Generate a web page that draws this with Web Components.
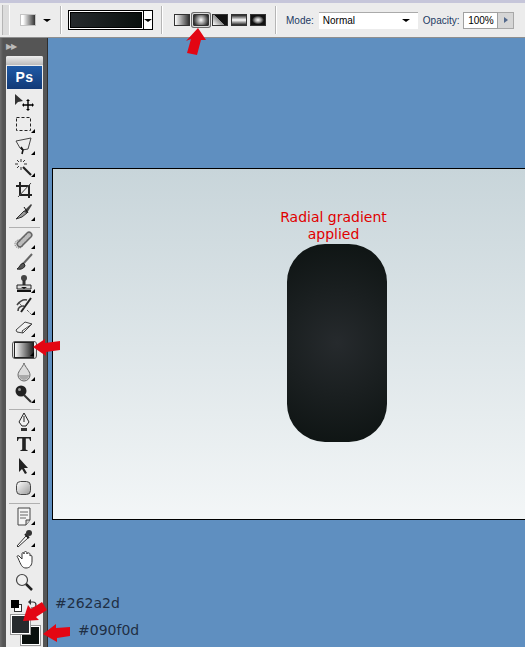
<!DOCTYPE html>
<html>
<head>
<meta charset="utf-8">
<style>
html,body{margin:0;padding:0;width:525px;height:647px;overflow:hidden;background:#5f8fc0;}
body{position:relative;font-family:"Liberation Sans",sans-serif;}
</style>
</head>
<body>
<ps-app>
	<ps-optionbar></ps-optionbar>
	<ps-workspace>
		<ps-toolbox></ps-toolbox>
		<ps-canvas></ps-canvas>
	</ps-workspace>
	<ps-arrow points="198,28 206,40 201,40 197,55 187,53 191,39 186,41"></ps-arrow>
	<ps-arrow points="33,347 45,339 45,343 60,341 60,350 46,352 46,356"></ps-arrow>
	<ps-arrow points="23,621 28,605 31,609 42,602 47,610 36,617 39,620"></ps-arrow>
	<ps-arrow points="43,634 56,624 56,628 70,627 70,636 57,638 57,642"></ps-arrow>
	<ps-note style="left:55px;top:595px">#262a2d</ps-note>
	<ps-note style="left:78px;top:622px">#090f0d</ps-note>
</ps-app>
<script>
(function() {

function define(name, css, html, setup) {
	const template = document.createElement('template');
	template.innerHTML = '<style>' + css + '</style>' + html;
	customElements.define(name, class extends HTMLElement {
		constructor() {
			super();
			this.attachShadow({mode: 'open'}).appendChild(template.content.cloneNode(true));
		}
		connectedCallback() { if (setup) setup(this); }
	});
}

define('ps-app', ':host{display:block;width:525px;height:647px;position:relative;overflow:hidden;}', '<slot></slot>');

define('ps-workspace', ':host{display:flex;height:609px;align-items:flex-start;gap:4px;}', '<slot></slot>');

// gradient type buttons
function gradBtn(bg, on) {
	return '<span class="gb' + (on ? ' on' : '') + '" style="background:' + bg + '"></span>';
}
define('ps-optionbar', `
:host{display:flex;align-items:center;box-sizing:border-box;height:38px;background:#ececec;border-top:3px solid #c6c6da;border-bottom:1px solid #8f8f8f;font-size:10px;color:#1c3a63;position:relative;}
.grip{width:8px;height:30px;margin-left:2px;background:#dcdcdc;border-left:1px solid #b5b5b5;border-right:1px solid #fff;box-sizing:border-box;}
.sw{width:16px;height:12px;margin-left:10px;background:linear-gradient(90deg,#fff 15%,#333);border:1px solid #c4c4c4;box-sizing:border-box;}
.tri{width:0;height:0;border:4px solid transparent;border-top:3px solid #000;border-bottom:0;}
.sep{width:1px;height:28px;background:#b5b5b5;border-right:1px solid #fff;}
.picker{display:flex;box-sizing:border-box;width:85px;height:20px;border:1px solid #000;background:#fff;margin-left:6px;}
.picker b{display:block;width:72px;margin:1px;border:1px solid #000;background:linear-gradient(90deg,#262a2d,#090f0d);}
.picker u{flex:1;display:flex;align-items:center;justify-content:center;border-left:1px solid #000;}
.types{display:flex;gap:3px;margin-left:11px;}
.gb{display:block;box-sizing:border-box;width:16px;height:12px;border:1px solid #333;}
.gb.on{box-shadow:0 0 0 1px #ddd,0 0 0 2px #6a6a6a;border-radius:1px;}
.sel{display:flex;align-items:center;box-sizing:border-box;width:99px;height:17px;background:#fff;margin-left:5px;border-top:1px solid #aaa;padding:0 8px 0 4px;color:#000;justify-content:space-between;}
.inp{box-sizing:border-box;width:35px;height:17px;border:1px solid #a0a0a0;background:#fff;color:#000;text-align:center;line-height:15px;margin-left:4px;}
.spin{box-sizing:border-box;width:16px;height:17px;background:#d6d6d6;border:1px solid #a8a8a8;border-left:0;display:flex;align-items:center;justify-content:center;}
.spin i{width:0;height:0;border:3px solid transparent;border-left:4px solid #53698c;border-right:0;}
.l{white-space:nowrap;}
`, `
<div class="grip"></div>
<div class="sw"></div>
<div class="tri" style="margin-left:7px"></div>
<div class="sep" style="margin-left:9px"></div>
<div class="picker"><b></b><u><div class="tri"></div></u></div>
<div class="sep" style="margin-left:8px"></div>
<div class="types">` +
	gradBtn('linear-gradient(90deg,#fff,#333)') +
	gradBtn('radial-gradient(circle,#fff,#333 85%)', true) +
	gradBtn('linear-gradient(45deg,#fff,#888 50%,#111 50%,#111)') +
	gradBtn('linear-gradient(180deg,#222,#fff 50%,#222)') +
	gradBtn('radial-gradient(ellipse 7px 5px at center,#fff,#999 45%,#111 85%)') + `
</div>
<div class="sep" style="margin-left:9px"></div>
<span class="l" style="margin-left:9px">Mode:</span>
<div class="sel"><span>Normal</span><div class="tri"></div></div>
<span class="l" style="margin-left:5px">Opacity:</span>
<div class="inp">100%</div>
<div class="spin"><i></i></div>
`);

define('ps-tool', `
:host{display:flex;align-items:center;justify-content:center;box-sizing:border-box;width:25px;height:22px;margin:0 auto;position:relative;}
:host([on]){height:18px;margin:2px auto;background:linear-gradient(#f4f4f4,#cfcfcf);border:1px solid #555;border-radius:3px;box-shadow:inset 0 0 1px #fff;}
:host([more])::after{content:"";position:absolute;right:2px;bottom:2px;border:2px solid transparent;border-right-color:#000;border-bottom-color:#000;}
svg{display:block;flex:none;transform:translateX(-1px);}
`, '<svg width="20" height="20" viewBox="0 0 20 20"><slot></slot></svg>', function(el) {
	el.shadowRoot.querySelector('svg').innerHTML = el.dataset.i;
});

const tools = [
	['<path d="M1 2v11l3-3 5-1z" fill="#333"/><path d="M14 9v8M10 13h8" stroke="#000" stroke-width="1.4"/><path d="M14 7l2 2h-4zM14 19l2-2h-4zM8 13l2-2v4zM20 13l-2-2v4z" fill="#000"/>', 0],
	['<rect x="2.5" y="3.5" width="14" height="13" fill="none" stroke="#222" stroke-dasharray="3 2"/>', 1],
	['<path d="M2 5l15-3-3 11-6 1-2-2z" fill="none" stroke="#444"/><path d="M7 11l2 3-1 4" fill="none" stroke="#111" stroke-width="1.6"/>', 1],
	['<path d="M9 9l8 8" stroke="#222" stroke-width="2.2"/><path d="M7 1v3M7 9v3M1 6h3M10 6h3M3 2l2 2M11 2l-2 2M3 10l2-2" stroke="#333"/>', 1],
	['<path d="M6 2v13h12M2 6h13v12" fill="none" stroke="#222" stroke-width="2"/><path d="M4 17L17 3" stroke="#444"/>', 0],
	['<path d="M2 17l8-8 3 2-5 4z" fill="#999" stroke="#333"/><path d="M10 9l7-7 1 1-5 8z" fill="#444"/><path d="M10 5l4 6" stroke="#111"/>', 1],
	null,
	['<circle cx="5" cy="14" r="4" fill="none" stroke="#555" stroke-dasharray="1 1"/><path d="M6 14L15 5" stroke="#666" stroke-width="7" stroke-linecap="round"/><path d="M6 14L15 5" stroke="#bbb" stroke-width="4" stroke-linecap="round" stroke-dasharray="1 2"/>', 1],
	['<path d="M18 2L9 12" stroke="#666" stroke-width="2"/><path d="M9 11c-3 1-3 4-6 6 4 1 8-1 8-4z" fill="#555" stroke="#222"/>', 1],
	['<circle cx="10" cy="4" r="3" fill="#444"/><path d="M10 6v5" stroke="#333" stroke-width="3"/><path d="M3 11h14v4H3z" fill="#ddd" stroke="#222"/><path d="M3 17h14" stroke="#111" stroke-width="2"/><path d="M7 13h6l-3 2z" fill="#111"/>', 1],
	['<path d="M3 9c3-4 6-6 10-5M4 15c0-4 3-5 6-5" fill="none" stroke="#444" stroke-width="1.6"/><path d="M17 2L7 16" stroke="#222" stroke-width="2"/><path d="M5 7l5 5" stroke="#666"/><path d="M13 14l4 4" stroke="#222" stroke-dasharray="1 1"/>', 1],
	['<path d="M2 12l9-8 7 2-9 9-6-1z" fill="#f2f2f2" stroke="#444"/><path d="M8 13l10-7M8 13l1 2" fill="none" stroke="#444"/>', 1],
	['<rect x="2.5" y="2.5" width="20" height="15" transform="translate(-2 0)" fill="url(#g)" stroke="#222"/><defs><linearGradient id="g"><stop offset="0" stop-color="#fff"/><stop offset="1" stop-color="#111"/></linearGradient></defs>', 1, 1],
	['<path d="M10 1c-1 4-6 8-6 12a6 6 0 0 0 12 0c0-4-5-8-6-12z" fill="#ddd" stroke="#666"/><path d="M5 13a5 5 0 0 0 10 0z" fill="#aaa"/>', 1],
	['<circle cx="7" cy="7" r="5.5" fill="#222"/><circle cx="5.5" cy="5.5" r="1.5" fill="#999"/><path d="M10 11l7 7" stroke="#333" stroke-width="2"/>', 1],
	null,
	['<path d="M10 1L5 10l3 4h4l3-4z" fill="#f2f2f2" stroke="#222"/><path d="M10 4v6" stroke="#222"/><path d="M7 16h6v3H7z" fill="#333"/>', 1],
	['<path d="M3 3h14v4h-.8l-1-2.6h-3.4v11.2l2 .9v.5H6.200v-.5l2-.9V4.400H4.800l-1 2.600H3z" fill="#222"/>', 1],
	['<path d="M5 2v14l3-3 3 5 2-1-3-5h4z" fill="#222"/>', 1],
	['<rect x="2.5" y="3.5" width="14" height="13" rx="4" fill="url(#s)" stroke="#444"/><defs><linearGradient id="s" x2="1" y2="1"><stop offset="0" stop-color="#fff"/><stop offset="1" stop-color="#999"/></linearGradient></defs>', 1],
	null,
	['<path d="M4 2h12v12l-4 5H4z" fill="#f5f5f5" stroke="#444"/><path d="M6 6h8M6 9h8M6 12h6" stroke="#666"/><path d="M12 19l0-5h4" fill="#ccc" stroke="#444"/>', 1],
	['<path d="M3 18l9-10 2 2-10 9z" fill="#fff" stroke="#333"/><path d="M11 6l4 4" stroke="#222" stroke-width="2"/><circle cx="15" cy="5" r="3" fill="#333"/>', 1],
	['<path d="M4 8c-2-2 0-3 1-2l3 3V4c0-2 2-2 2 0V3c0-2 3-2 3 0v1c0-2 3-1 3 0v2c1-1 2-1 2 1v4c0 4-2 7-6 7-4 0-5-3-8-10z" fill="#fff" stroke="#333"/>', 0],
	['<circle cx="8" cy="8" r="5.5" fill="#f0f0f0" stroke="#444" stroke-width="1.2"/><path d="M12 12l6 6" stroke="#222" stroke-width="2.5"/>', 0]
];

let list = '';
tools.forEach(function(t) {
	if (!t) { list += '<hr>'; return; }
	list += '<ps-tool data-i="' + t[0].replace(/"/g, '&quot;') + '"' + (t[1] ? ' more' : '') + (t[2] ? ' on' : '') + '></ps-tool>';
});

define('ps-toolbox', `
:host{display:block;box-sizing:border-box;width:48px;height:609px;background:linear-gradient(90deg,#6d6d6d,#555 3px);border-right:1px solid #2e2e2e;flex:none;padding-left:6px;}
.head{height:18px;color:#bbb;font-size:8px;line-height:18px;letter-spacing:-1px;}
.panel{box-sizing:border-box;width:37px;height:591px;background:#ececec;border-radius:2px 2px 0 0;}
.strip{height:9px;background:linear-gradient(#eee,#bcbcbc);border-radius:2px 2px 0 0;}
.ps{height:23px;background:linear-gradient(#1f5aa6,#123a77);color:#fff;font:bold 14px/23px "Liberation Sans",sans-serif;text-align:center;margin:1px 1px 2px;letter-spacing:.5px;}
hr{border:0;height:1px;background:#b0b0b0;margin:4px 3px 1px;}
.sw{position:relative;height:55px;}
.mini,.mini2{position:absolute;box-sizing:border-box;}
.mini{left:5px;top:7px;width:8px;height:8px;background:#000;}
.mini2{left:8px;top:11px;width:8px;height:8px;background:#fff;border:1px solid #333;}
.swap{position:absolute;left:22px;top:6px;}
.fg,.bg{position:absolute;box-sizing:border-box;width:19px;height:19px;border:1px solid #fff;outline:1px solid #999;}
.bg{left:15px;top:33px;background:#090f0d;}
.fg{left:5px;top:22px;background:#262a2d;}
`, `
<div class="head">&#9654;&#9654;</div>
<div class="panel">
	<div class="strip"></div>
	<div class="ps">Ps</div>
	` + list + `
	<div class="sw">
		<div class="mini2"></div><div class="mini"></div>
		<svg class="swap" width="9" height="11" viewBox="0 0 9 11"><path d="M1 3h4c4 0 4 6 0 6H3" fill="none" stroke="#333" stroke-width="1.2"/><path d="M3 0L0 3l3 3z" fill="#333"/></svg>
		<div class="bg"></div><div class="fg"></div>
	</div>
</div>
`);

define('ps-canvas', `
:host{display:flex;justify-content:center;box-sizing:border-box;flex:none;width:480px;height:352px;margin-top:130px;border:1px solid #000;background:linear-gradient(#c8d5da,#f3f6f7);position:relative;}
.wrap{display:flex;flex-direction:column;align-items:center;width:100px;margin-left:90px;padding-top:40px;}
.label{color:#e00000;font:14px/17px "DejaVu Sans",sans-serif;text-align:center;white-space:nowrap;margin:0 7px 1px 0;}
.shape{width:100px;height:198px;border-radius:38px;background:radial-gradient(circle 105px at center,#262a2d,#0e1413);}
`, `
<div class="wrap">
	<div class="label">Radial gradient<br>applied</div>
	<div class="shape"></div>
</div>
`);

define('ps-arrow', ':host{position:absolute;left:0;top:0;width:525px;height:647px;pointer-events:none;}svg{display:block;}', '<svg width="525" height="647"><polygon fill="#e30613"></polygon></svg>', function(el) {
	el.shadowRoot.querySelector('polygon').setAttribute('points', el.getAttribute('points'));
});

define('ps-note', ':host{position:absolute;color:#1f2f45;font:14px/16px "DejaVu Sans",sans-serif;}', '<slot></slot>');

})();
</script>
</body>
</html>
